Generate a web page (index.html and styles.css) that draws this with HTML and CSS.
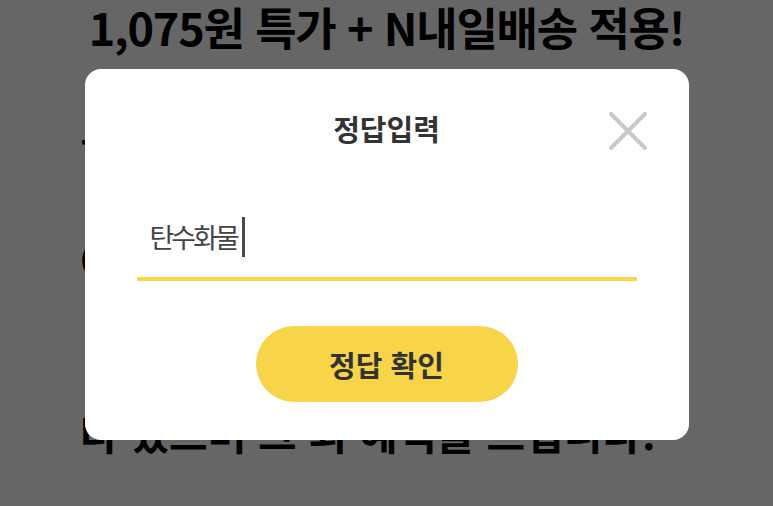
FILE: index.html
```html
<!DOCTYPE html>
<html lang="ko">
<head>
    <meta charset="UTF-8">
    <meta name="viewport" content="width=device-width, initial-scale=1.0">
    <title>정답입력</title>
    <link rel="stylesheet" href="styles.css">
</head>
<body>
    <main class="page">
        <h1 class="headline">1,075원 특가 + N내일배송 적용!</h1>
        <p class="notice">- 이벤트 기간 동안 정답을 맞히면</p>
        <p class="notice">OK캐쉬백 포인트를 드립니다.</p>
        <p class="notice">다 있으며 그 외 혜택을 드립니다!</p>
    </main>

    <div class="overlay">
        <div class="quiz-modal">
            <div class="modal-header">
                <h2>정답입력</h2>
                <button class="close-btn" aria-label="닫기">
                    <svg width="38" height="38" viewBox="0 0 38 38">
                        <path d="M2 2 L36 36 M36 2 L2 36" stroke="#c9c9c9" stroke-width="4" stroke-linecap="round" fill="none"/>
                    </svg>
                </button>
            </div>
            <div class="answer-field">
                <span class="answer-text">탄수화물</span><span class="caret"></span>
            </div>
            <button class="submit-btn">정답 확인</button>
        </div>
    </div>
</body>
</html>
```

FILE: styles.css
```css
:root {
    --dim: rgba(0, 0, 0, 0.6);
    --yellow: #f7d448;
    --text-dark: #333333;
    --close-gray: #c9c9c9;
}

* {
    box-sizing: border-box;
}

body {
    margin: 0;
    padding: 0;
    background-color: #ffffff;
    font-family: 'Noto Sans CJK KR', 'Noto Sans', sans-serif;
    color: #000000;
    overflow: hidden;
    height: 506px;
}

.page {
    padding: 0 0 0 80px;
}

.headline {
    margin: 0;
    margin-left: -80px;
    text-align: center;
    font-size: 45px;
    font-weight: 700;
    line-height: 54px;
    letter-spacing: -1.2px;
    white-space: nowrap;
}

.notice {
    margin: 0;
    font-size: 42px;
    font-weight: 700;
    line-height: 56px;
    white-space: nowrap;
}

.notice:nth-of-type(1) {
    margin-top: 58px;
}

.notice:nth-of-type(2) {
    margin-top: 62px;
}

.notice:nth-of-type(3) {
    margin-top: 118px;
}

.overlay {
    position: fixed;
    inset: 0;
    background-color: var(--dim);
    display: flex;
    justify-content: center;
    align-items: center;
}

.quiz-modal {
    position: relative;
    width: 604px;
    margin-top: 3px;
    background-color: #ffffff;
    border-radius: 16px;
    padding: 40px 52px 38px;
    display: flex;
    flex-direction: column;
    align-items: center;
}

.modal-header {
    width: 100%;
    text-align: center;
}

.modal-header h2 {
    margin: 0;
    font-size: 29px;
    font-weight: 700;
    line-height: 38px;
    color: var(--text-dark);
}

.close-btn {
    position: absolute;
    top: 43px;
    right: 42px;
    width: 38px;
    height: 38px;
    padding: 0;
    border: none;
    background: none;
    cursor: pointer;
}

.close-btn svg {
    display: block;
}

.answer-field {
    width: 100%;
    margin-top: 70px;
    padding: 0 13px 20px;
    border-bottom: 4px solid var(--yellow);
    display: flex;
    align-items: center;
}

.answer-text {
    font-size: 27px;
    line-height: 40px;
    letter-spacing: -3px;
    color: #444444;
}

.caret {
    width: 3px;
    height: 40px;
    margin-left: 5px;
    background-color: #4a4a4a;
}

.submit-btn {
    margin-top: 45px;
    width: 262px;
    height: 76px;
    border: none;
    border-radius: 38px;
    background-color: var(--yellow);
    color: var(--text-dark);
    font-family: inherit;
    font-size: 29px;
    font-weight: 700;
    cursor: pointer;
}
```
